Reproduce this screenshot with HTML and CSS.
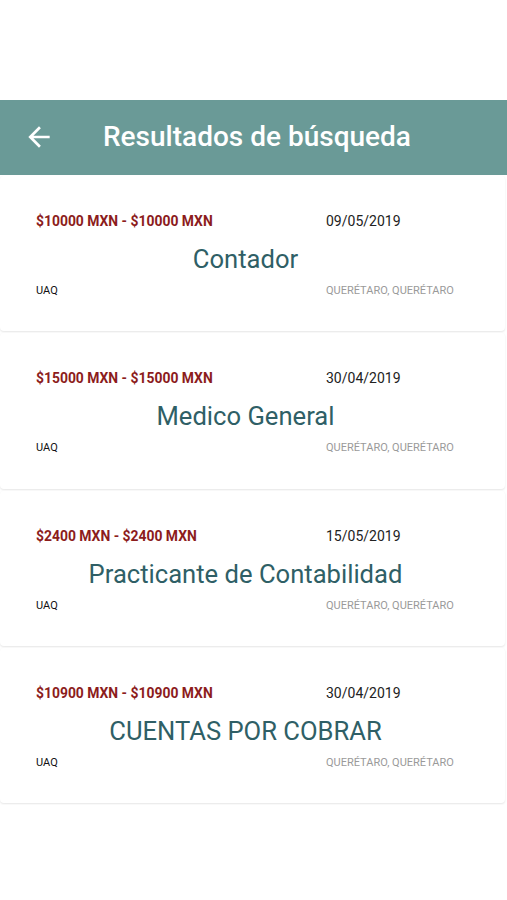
FILE: index.html
```html
<!DOCTYPE html>
<html>
  <head>
    <title>Resultados de búsqueda</title>
    <link rel="stylesheet" href="styles.css">
  </head>
  <body>
    <div class="status-space"></div>
    <div class="toolbar">
      <span class="back">
        <svg width="32" height="32" viewBox="0 0 24 24"><path d="M20 11H7.83l5.59-5.59L12 4l-8 8 8 8 1.41-1.41L7.83 13H20v-2z" fill="#fff"/></svg>
      </span>
      <span class="toolbar-title">Resultados de búsqueda</span>
    </div>
    <div class="list">
      <div class="card">
        <div class="row">
          <span class="salary">$10000 MXN - $10000 MXN</span>
          <span class="date">09/05/2019</span>
        </div>
        <div class="job">Contador</div>
        <div class="row">
          <span class="company">UAQ</span>
          <span class="place">QUERÉTARO, QUERÉTARO</span>
        </div>
      </div>
      <div class="card">
        <div class="row">
          <span class="salary">$15000 MXN - $15000 MXN</span>
          <span class="date">30/04/2019</span>
        </div>
        <div class="job">Medico General</div>
        <div class="row">
          <span class="company">UAQ</span>
          <span class="place">QUERÉTARO, QUERÉTARO</span>
        </div>
      </div>
      <div class="card">
        <div class="row">
          <span class="salary">$2400 MXN - $2400 MXN</span>
          <span class="date">15/05/2019</span>
        </div>
        <div class="job">Practicante de Contabilidad</div>
        <div class="row">
          <span class="company">UAQ</span>
          <span class="place">QUERÉTARO, QUERÉTARO</span>
        </div>
      </div>
      <div class="card">
        <div class="row">
          <span class="salary">$10900 MXN - $10900 MXN</span>
          <span class="date">30/04/2019</span>
        </div>
        <div class="job">CUENTAS POR COBRAR</div>
        <div class="row">
          <span class="company">UAQ</span>
          <span class="place">QUERÉTARO, QUERÉTARO</span>
        </div>
      </div>
    </div>
  </body>
</html>
```

FILE: styles.css
```css
body {
  margin: 0;
  background: #fff;
  font-family: Roboto, "Liberation Sans", sans-serif;
}
.status-space {
  height: 100px;
}
.toolbar {
  height: 75px;
  background-color: #6a9a97;
  display: flex;
  align-items: center;
}
.back {
  width: 32px;
  height: 32px;
  margin-left: 23px;
  margin-top: -2px;
}
.back svg {
  display: block;
}
.toolbar-title {
  margin-left: 48px;
  color: #fff;
  font-size: 28px;
  font-weight: 500;
  margin-top: -2px;
}
.list {
  padding-top: 1px;
}
.card {
  height: 155.3px;
  margin: 0 2px 2px 0;
  border-radius: 4px;
  background: #fff;
  box-shadow: 0 1px 2px rgba(0, 0, 0, 0.1);
  padding: 36px 0 0 36px;
  box-sizing: border-box;
}
.row {
  display: flex;
  align-items: center;
}
.salary {
  width: 290px;
  color: #8c1c1c;
  font-size: 13.9px;
  font-weight: 700;
  line-height: 18px;
}
.date {
  color: #222;
  font-size: 14px;
  line-height: 18px;
}
.job {
  width: 419px;
  text-align: center;
  color: #2f5f66;
  font-size: 25.6px;
  line-height: 30px;
  margin: 14px 0 10px;
}
.company {
  width: 290px;
  color: #111;
  font-size: 11px;
  line-height: 14px;
}
.place {
  color: #9a9a9a;
  font-size: 11px;
  line-height: 14px;
}
```
